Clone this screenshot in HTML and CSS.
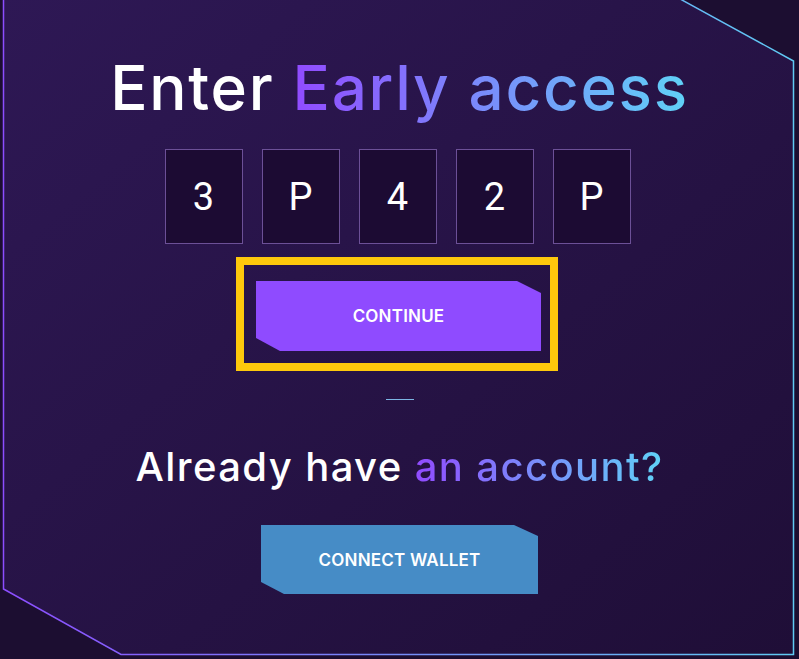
FILE: index.html
```html
<!DOCTYPE html>
<html lang="en">
<head>
    <meta charset="UTF-8">
    <meta name="viewport" content="width=device-width, initial-scale=1.0">
    <title>Early Access</title>
    <link rel="stylesheet" href="styles.css">
</head>
<body>
    <main class="screen">
        <!-- card frame, drawn behind the content -->
        <svg class="frame" width="799" height="659" viewBox="0 0 799 659">
            <defs>
                <linearGradient id="fill" x1="0" y1="0" x2="1" y2="1">
                    <stop offset="0" stop-color="#2e1855"/>
                    <stop offset="1" stop-color="#1f0e37"/>
                </linearGradient>
                <linearGradient id="edge" x1="0" y1="0" x2="1" y2="0">
                    <stop offset="0" stop-color="#8c4dff"/>
                    <stop offset="1" stop-color="#5fcaf3"/>
                </linearGradient>
            </defs>
            <polygon points="3.5,-10 3.5,589 121,654.5 793.5,654.5 793.5,61 663.7,-10"
                     fill="url(#fill)" stroke="url(#edge)" stroke-width="1.5"/>
        </svg>

        <section class="panel">
            <h1 class="title">Enter <span class="grad">Early access</span></h1>

            <div class="code">
                <div class="digit">3</div>
                <div class="digit">P</div>
                <div class="digit">4</div>
                <div class="digit">2</div>
                <div class="digit">P</div>
            </div>

            <div class="focus-ring">
                <button class="btn btn-continue">CONTINUE</button>
            </div>

            <hr class="divider">

            <h2 class="subtitle">Already have <span class="grad">an account?</span></h2>

            <button class="btn btn-wallet">CONNECT WALLET</button>
        </section>
    </main>
</body>
</html>
```

FILE: styles.css
```css
body {
    margin: 0;
    background-color: #1c0e31;
    font-family: Inter, "Noto Sans", sans-serif;
    color: #fff;
}

.screen {
    position: relative;
    width: 799px;
    height: 659px;
    overflow: hidden;
}

.frame {
    position: absolute;
    top: 0;
    left: 0;
}

.panel {
    position: relative;
    display: flex;
    flex-direction: column;
    align-items: center;
    padding-top: 50px;
}

.title {
    margin: 0;
    font-size: 62px;
    line-height: 76px;
    font-weight: 500;
    letter-spacing: 1.7px;
}

.grad {
    background: linear-gradient(90deg, #914bff, #60d2f7);
    -webkit-background-clip: text;
    background-clip: text;
    color: transparent;
}

.code {
    display: flex;
    gap: 19px;
    margin-top: 23px;
    margin-right: 4px;
}

.digit {
    width: 76px;
    height: 93px;
    border: 1px solid #6c5097;
    background-color: #1c0b33;
    display: flex;
    align-items: center;
    justify-content: center;
    font-family: Roboto, "Liberation Sans", sans-serif;
    font-size: 38px;
}

.focus-ring {
    margin-top: 13px;
    margin-right: 5px;
    border: 8px solid #fec80c;
    padding: 16px 9px 12px 12px;
}

.btn {
    display: flex;
    align-items: center;
    justify-content: center;
    border: none;
    color: #fff;
    font-family: Inter, "Noto Sans", sans-serif;
    font-size: 17px;
    font-weight: 600;
    letter-spacing: 0.2px;
    cursor: pointer;
}

.btn-continue {
    width: 285px;
    height: 70px;
    background-color: #8f4bff;
    clip-path: polygon(0 0, 261px 0, 100% 12px, 100% 100%, 24px 100%, 0 57px);
}

.divider {
    width: 28px;
    height: 1px;
    margin: 28px 0 0;
    border: none;
    background-color: #7db6e4;
}

.subtitle {
    margin: 42px 0 0;
    font-size: 40px;
    line-height: 50px;
    font-weight: 500;
    letter-spacing: 1.4px;
}

.btn-wallet {
    margin-top: 33px;
    width: 277px;
    height: 69px;
    background-color: #468cc6;
    clip-path: polygon(0 0, 253px 0, 100% 11px, 100% 100%, 23px 100%, 0 57px);
}
```
